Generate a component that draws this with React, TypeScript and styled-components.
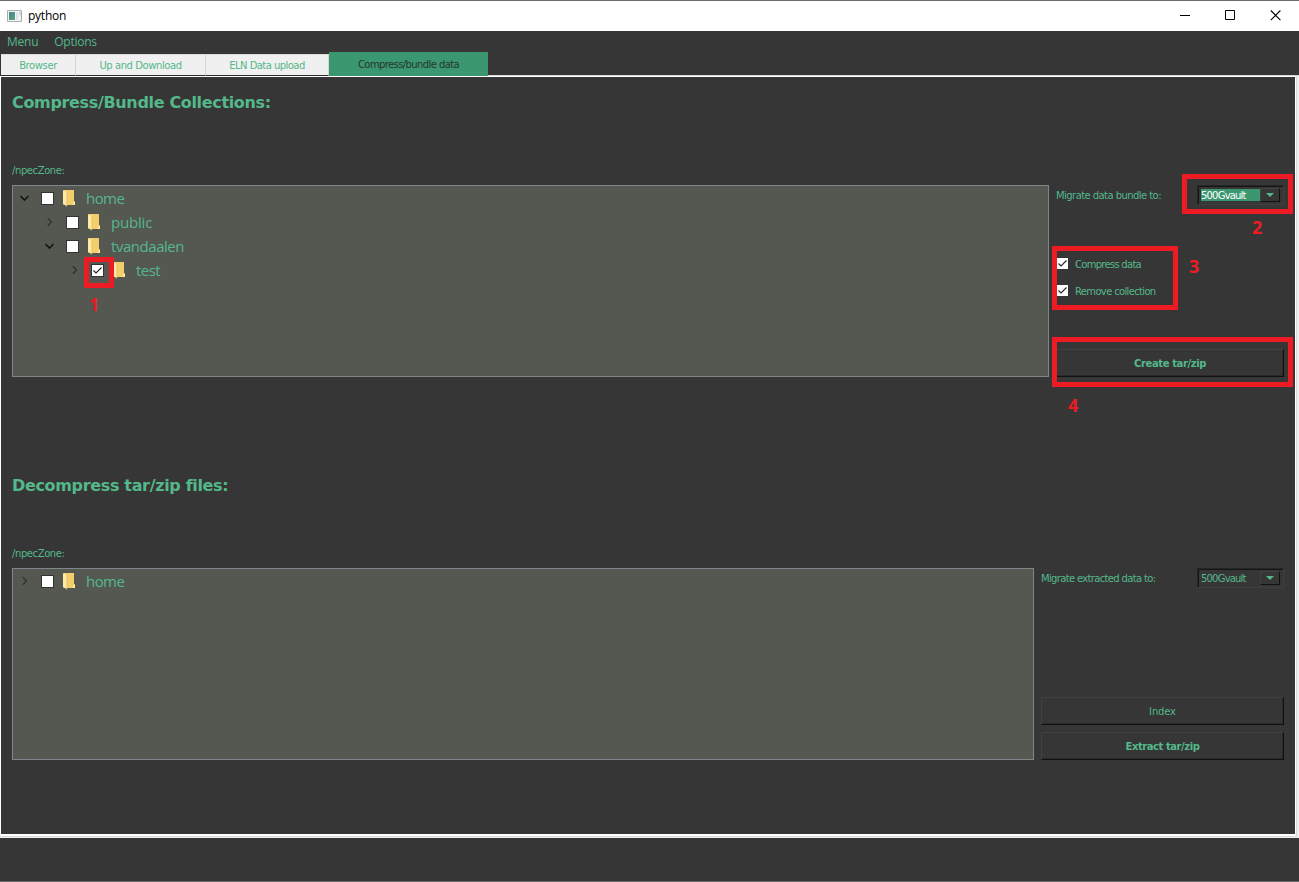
import React from 'react';
import styled, { createGlobalStyle, css } from 'styled-components';

const GREEN = '#54b88a';
const DARK = '#363636';
const RED = '#ed1c24';

const GlobalStyle = createGlobalStyle`
  * { box-sizing: border-box; }
  body { margin: 0; background: ${DARK}; }
`;

const Window = styled.div`
  position: relative;
  display: flex;
  flex-direction: column;
  width: 1299px;
  height: 882px;
  overflow: hidden;
  background: ${DARK};
  border-top: 1px solid #6b6b6b;
  border-bottom: 1px solid #6a6a6a;
  color: ${GREEN};
  font-family: 'DejaVu Sans', sans-serif;
  font-size: 10px;
  line-height: 14px;
  white-space: nowrap;
`;

const TitleBar = styled.header`
  display: flex;
  align-items: center;
  height: 30px;
  flex: none;
  padding: 0 18px 1px 7px;
  background: #fff;
  color: #000;
`;

const WindowTitle = styled.span`
  flex: 1;
  margin: 1px 0 0 6px;
  font: 12px/16px 'Open Sans', sans-serif;
  letter-spacing: -0.25px;
`;

const WindowControls = styled.div`
  display: flex;
  gap: 34px;
`;

const MenuBar = styled.nav`
  display: flex;
  gap: 16px;
  height: 21px;
  flex: none;
  padding: 2px 7px 0;
  font: 12px/18px 'Open Sans', sans-serif;
`;

const MenuItem = styled.span<{ $tracking: number }>`
  letter-spacing: ${(p) => p.$tracking}px;
`;

const TabStrip = styled.div`
  display: flex;
  align-items: flex-end;
  height: 24px;
  flex: none;
  padding-left: 1px;
`;

const Tab = styled.div<{ $width: number; $tracking: number; $active?: boolean }>`
  display: flex;
  justify-content: center;
  width: ${(p) => p.$width}px;
  letter-spacing: ${(p) => p.$tracking}px;
  ${(p) =>
    p.$active
      ? css`
          height: 24px;
          padding-top: 6px;
          background: #3a9770;
          color: #29362f;
        `
      : css`
          height: 22px;
          padding-top: 4px;
          background: #f0f0f0;
          border-top: 1px solid #dcdcdc;
          border-right: 1px solid #d5d5d5;
          border-bottom: 1px solid #2c2c2c;
        `}
`;

const TabRule = styled.div`
  flex: 1;
  height: 1px;
  background: #d9d9d9;
`;

const PaneFrame = styled.div`
  flex: none;
  height: 762px;
  padding-right: 2px;
  background: #f0f0f0;
`;

const PaneBevel = styled.div`
  height: 761px;
  border-right: 1px solid #d9d9d9;
  border-bottom: 1px solid #d9d9d9;
`;

const Pane = styled.main`
  height: 760px;
  border: 1px solid #fff;
  border-bottom-width: 2px;
  background: ${DARK};
  padding: 0 11px;
`;

const Section = styled.section`
  height: 383px;
  padding-top: 14px;
`;

const Heading = styled.h1`
  margin: 0;
  height: 73px;
  font-size: 16px;
  font-weight: 700;
  line-height: 24px;
  letter-spacing: -0.34px;
`;

const ZoneLabel = styled.div`
  height: 21px;
  letter-spacing: -0.4px;
`;

const Columns = styled.div<{ $gap: number }>`
  display: flex;
  gap: ${(p) => p.$gap}px;
  height: 192px;
`;

const Tree = styled.div`
  flex: 1;
  border: 1px solid #80858c;
  background: #555751;
`;

const TreeRow = styled.div<{ $depth: number }>`
  display: flex;
  align-items: center;
  height: 24px;
  padding-left: ${(p) => 7 + p.$depth * 25}px;
`;

const Toggle = styled.svg`
  width: 10px;
  height: 10px;
  flex: none;
  margin-right: 11px;
`;

const Box = styled.span`
  display: flex;
  width: 13px;
  height: 13px;
  flex: none;
  border: 1px solid #333;
  background: #fff;
`;

const TreeBox = styled(Box)`
  margin-top: 1px;
`;

const FolderSvg = styled.svg`
  width: 13px;
  height: 18px;
  flex: none;
  margin-left: 9px;
`;

const NodeName = styled.span<{ $tracking: number }>`
  margin-left: 10px;
  font: 15px/22px 'Open Sans', sans-serif;
  letter-spacing: ${(p) => p.$tracking}px;
`;

const Controls = styled.aside<{ $width: number }>`
  display: flex;
  flex-direction: column;
  width: ${(p) => p.$width}px;
`;

const TargetRow = styled.div`
  display: flex;
  justify-content: space-between;
  align-items: flex-start;
  height: 20px;
`;

const FieldLabel = styled.span<{ $tracking: number }>`
  padding-top: 4px;
  letter-spacing: ${(p) => p.$tracking}px;
`;

const Combo = styled.div`
  display: flex;
  align-items: center;
  width: 87px;
  height: 20px;
  border: 1px solid #3f3f3f;
  border-top-color: #262626;
  border-left-color: #262626;
  box-shadow: inset 1px 1px #151515;
  padding: 1px 2px 1px 3px;
`;

const ComboValue = styled.span<{ $selected?: boolean }>`
  width: 59px;
  height: 12px;
  line-height: 13px;
  letter-spacing: -0.8px;
  background: ${(p) => (p.$selected ? '#3a9770' : 'transparent')};
  color: ${(p) => (p.$selected ? '#fff' : GREEN)};
`;

const ComboButton = styled.span`
  display: flex;
  align-items: center;
  justify-content: center;
  width: 20px;
  height: 14px;
  border: 1px solid #414141;
  border-right-color: #111;
  border-bottom-color: #111;
`;

const Options = styled.div`
  display: flex;
  flex-direction: column;
  gap: 14px;
  margin-top: 52px;
`;

const Option = styled.label<{ $tracking: number }>`
  display: flex;
  align-items: center;
  gap: 6px;
  height: 13px;
  letter-spacing: ${(p) => p.$tracking}px;
`;

const OptionText = styled.span`
  padding-top: 2px;
`;

const Buttons = styled.div`
  display: flex;
  flex-direction: column;
  gap: 7px;
  margin-top: auto;
`;

const Button = styled.button<{ $bold?: boolean; $tracking: number }>`
  height: 28px;
  padding: 2px 0 0;
  border: 1px solid #414141;
  border-right-color: #111;
  border-bottom-color: #111;
  box-shadow: inset -1px -1px #292929;
  background: transparent;
  color: ${GREEN};
  font: ${(p) => (p.$bold ? 700 : 400)} 10px/14px 'DejaVu Sans', sans-serif;
  letter-spacing: ${(p) => p.$tracking}px;
`;

/* Markers drawn over the interface: a red frame or a red step number. */
const Frame = styled.div<{ $x: number; $y: number; $w: number; $h: number }>`
  position: absolute;
  left: ${(p) => p.$x}px;
  top: ${(p) => p.$y - 1}px;
  width: ${(p) => p.$w}px;
  height: ${(p) => p.$h}px;
  border: 5px solid ${RED};
`;

const Step = styled.span<{ $x: number; $y: number }>`
  position: absolute;
  left: ${(p) => p.$x}px;
  top: ${(p) => p.$y - 1}px;
  color: ${RED};
  font: 700 18px/20px 'Open Sans', sans-serif;
`;

const Check = () => (
  <svg width="11" height="11" viewBox="0 0 11 11">
    <path d="M1.5 5.5 4 8 9.5 2.5" fill="none" stroke="#222" strokeWidth="1.1" />
  </svg>
);

const Folder = () => (
  <FolderSvg viewBox="0 0 13 18">
    <path d="M1 1h10v11.5h1V16H1z" fill="#f3cf6c" />
    <path d="M11 12.5h1V16h-2v-2z" fill="#ffe79b" />
    <path d="M0 1l3.8 2v14.6L2.6 17V15.5H0z" fill="#ffe9a6" />
    <path d="M3.8 3v14" stroke="#d9b45a" strokeWidth=".5" />
  </FolderSvg>
);

interface NodeProps {
  name: string;
  depth: number;
  tracking: number;
  open?: boolean;
  checked?: boolean;
}

const TreeNode = ({ name, depth, tracking, open, checked }: NodeProps) => (
  <TreeRow $depth={depth}>
    <Toggle viewBox="0 0 10 10">
      {open ? (
        <path d="M.5 3l4 4 4-4" fill="none" stroke="#151515" strokeWidth="1.6" />
      ) : (
        <path d="M2.8 1.3l3.7 3.7-3.7 3.7" fill="none" stroke="#333" strokeWidth="1.4" />
      )}
    </Toggle>
    <TreeBox>{checked && <Check />}</TreeBox>
    <Folder />
    <NodeName $tracking={tracking}>{name}</NodeName>
  </TreeRow>
);

const VaultCombo = ({ selected }: { selected?: boolean }) => (
  <Combo>
    <ComboValue $selected={selected}>500Gvault</ComboValue>
    <ComboButton>
      <svg width="8" height="4" viewBox="0 0 8 4">
        <path d="M0 0h8L4 4z" fill={GREEN} />
      </svg>
    </ComboButton>
  </Combo>
);

export default function App() {
  return (
    <Window>
      <GlobalStyle />
      <TitleBar>
        <svg width="15" height="12" viewBox="0 0 15 12">
          <defs>
            <linearGradient id="app" x1="0" y1="0" x2="1" y2="1">
              <stop offset="0" stopColor="#4a7f96" />
              <stop offset="1" stopColor="#58a878" />
            </linearGradient>
          </defs>
          <path d="M.5.5h14v11H.5z" fill="#f4f4f4" stroke="#a9adb0" />
          <path d="M2 2h6v8H2z" fill="url(#app)" />
          <path d="M9 2h2v8H9z" fill="#dfe4e6" />
          <path d="M12 2h1.5v5z" fill="#9cc8b4" />
        </svg>
        <WindowTitle>python</WindowTitle>
        <WindowControls>
          <svg width="11" height="11" viewBox="0 0 11 11">
            <path d="M0 5.5h10" stroke="#000" />
          </svg>
          <svg width="11" height="11" viewBox="0 0 11 11">
            <path d="M.5.5h9v9h-9z" fill="none" stroke="#000" />
          </svg>
          <svg width="11" height="11" viewBox="0 0 11 11">
            <path d="M.8.5l9.6 9.6M10.4.5L.8 10.1" stroke="#000" strokeWidth="1.1" />
          </svg>
        </WindowControls>
      </TitleBar>
      <MenuBar>
        <MenuItem $tracking={-0.25}>Menu</MenuItem>
        <MenuItem $tracking={-0.25}>Options</MenuItem>
      </MenuBar>
      <TabStrip>
        <Tab $width={75} $tracking={-0.4}>Browser</Tab>
        <Tab $width={130} $tracking={-0.42}>Up and Download</Tab>
        <Tab $width={123} $tracking={-0.55}>ELN Data upload</Tab>
        <Tab $width={159} $tracking={-0.6} $active>Compress/bundle data</Tab>
        <TabRule />
      </TabStrip>
      <PaneFrame>
        <PaneBevel>
          <Pane>
            <Section>
              <Heading>Compress/Bundle Collections:</Heading>
              <ZoneLabel>/npecZone:</ZoneLabel>
              <Columns $gap={7}>
                <Tree>
                  <TreeNode name="home" depth={0} tracking={-0.55} open />
                  <TreeNode name="public" depth={1} tracking={-0.2} />
                  <TreeNode name="tvandaalen" depth={1} tracking={-0.46} open />
                  <TreeNode name="test" depth={2} tracking={-0.55} checked />
                </Tree>
                <Controls $width={228}>
                  <TargetRow>
                    <FieldLabel $tracking={-0.56}>Migrate data bundle to:</FieldLabel>
                    <VaultCombo selected />
                  </TargetRow>
                  <Options>
                    <Option $tracking={-0.72}>
                      <Box><Check /></Box>
                      <OptionText>Compress data</OptionText>
                    </Option>
                    <Option $tracking={-0.66}>
                      <Box><Check /></Box>
                      <OptionText>Remove collection</OptionText>
                    </Option>
                  </Options>
                  <Buttons>
                    <Button $bold $tracking={-0.38}>Create tar/zip</Button>
                  </Buttons>
                </Controls>
              </Columns>
            </Section>
            <Section>
              <Heading>Decompress tar/zip files:</Heading>
              <ZoneLabel>/npecZone:</ZoneLabel>
              <Columns $gap={7}>
                <Tree>
                  <TreeNode name="home" depth={0} tracking={-0.55} />
                </Tree>
                <Controls $width={243}>
                  <TargetRow>
                    <FieldLabel $tracking={-0.66}>Migrate extracted data to:</FieldLabel>
                    <VaultCombo />
                  </TargetRow>
                  <Buttons>
                    <Button $tracking={-0.15}>Index</Button>
                    <Button $bold $tracking={-0.44}>Extract tar/zip</Button>
                  </Buttons>
                </Controls>
              </Columns>
            </Section>
          </Pane>
        </PaneBevel>
      </PaneFrame>
      <Frame $x={84} $y={257} $w={30} $h={31} />
      <Frame $x={1182} $y={174} $w={111} $h={40} />
      <Frame $x={1052} $y={246} $w={126} $h={64} />
      <Frame $x={1052} $y={337} $w={241} $h={50} />
      <Step $x={89} $y={294}>1</Step>
      <Step $x={1252} $y={217}>2</Step>
      <Step $x={1189} $y={256}>3</Step>
      <Step $x={1068} $y={395}>4</Step>
    </Window>
  );
}
